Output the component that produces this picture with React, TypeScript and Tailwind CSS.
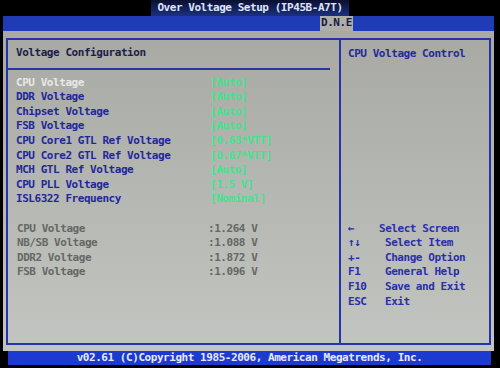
import React from 'react';

const settings = [
  { label: 'CPU Voltage', value: '[Auto]', active: true },
  { label: 'DDR Voltage', value: '[Auto]' },
  { label: 'Chipset Voltage', value: '[Auto]' },
  { label: 'FSB Voltage', value: '[Auto]' },
  { label: 'CPU Core1 GTL Ref Voltage', value: '[0.63*VTT]' },
  { label: 'CPU Core2 GTL Ref Voltage', value: '[0.67*VTT]' },
  { label: 'MCH GTL Ref Voltage', value: '[Auto]' },
  { label: 'CPU PLL Voltage', value: '[1.5 V]' },
  { label: 'ISL6322 Frequency', value: '[Nominal]' },
];

const readings = [
  { label: 'CPU Voltage', value: ':1.264 V' },
  { label: 'NB/SB Voltage', value: ':1.088 V' },
  { label: 'DDR2 Voltage', value: ':1.872 V' },
  { label: 'FSB Voltage', value: ':1.096 V' },
];

const help = [
  { key: '←', text: 'Select Screen', shift: true },
  { key: '↑↓', text: 'Select Item' },
  { key: '+-', text: 'Change Option' },
  { key: 'F1', text: 'General Help' },
  { key: 'F10', text: 'Save and Exit' },
  { key: 'ESC', text: 'Exit' },
];

const App = () => {
  return (
    <div
      className="w-[500px] h-[368px] bg-black overflow-hidden text-[11px] font-bold tracking-[-0.45px] leading-[14.6px]"
      style={{ fontFamily: '"DejaVu Sans Mono", "Liberation Mono", monospace' }}
    >
      {/* title */}
      <div className="h-[16px] flex justify-center">
        <span className="px-[6px] pt-[1px] bg-[linear-gradient(to_bottom,#0a1030,#1b3080)] text-[#dfe3f6]">
          Over Voltage Setup (IP45B-A7T)
        </span>
      </div>

      {/* menu bar */}
      <div className="ml-[3px] mr-[6px] h-[15px] bg-[#1f3cb4] flex">
        <span className="ml-[317px] px-[1px] bg-[#aeaea6] text-[#1a1c48]">D.N.E</span>
      </div>

      {/* main panel */}
      <div className="ml-[3px] mr-[6px] h-[320px] pt-[7px] px-[3px] pb-[6px] bg-[linear-gradient(to_bottom,#a8a9a3,#c2c5c1)]">
        <div className="h-full border-2 border-[#2634a8] flex">
          {/* left */}
          <div className="w-[333px] border-r-2 border-[#2634a8] pt-[6px]">
            <div className="pl-[8px] text-[#1c1d4c]">Voltage Configuration</div>
            <div className="mt-[7px] mr-[9px] h-[2px] bg-[#2634a8]"></div>
            <div className="mt-[6px] pl-[8px]">
              {settings.map((s) => (
                <div key={s.label} className="flex">
                  <span className={`w-[194px] ${s.active ? 'text-[#e6e8e6]' : 'text-[#22289a]'}`}>{s.label}</span>
                  <span className="text-[#3fe58e]">{s.value}</span>
                </div>
              ))}
            </div>
            <div className="mt-[14.6px] pl-[9px]">
              {readings.map((r) => (
                <div key={r.label} className="flex text-[#666866]">
                  <span className="w-[191px]">{r.label}</span>
                  <span>{r.value}</span>
                </div>
              ))}
            </div>
          </div>

          {/* right */}
          <div className="flex-1 pt-[7px] pl-[7px]">
            <div className="text-[#25299c]">CPU Voltage Control</div>
            <div className="mt-[160px] pl-[-2px]">
              {help.map((h) => (
                <div key={h.key} className="flex text-[#2a30a8]">
                  <span className="w-[37px]">{h.key}</span>
                  <span className={h.shift ? '-ml-[6px]' : ''}>{h.text}</span>
                </div>
              ))}
            </div>
          </div>
        </div>
      </div>

      {/* footer */}
      <div className="ml-[8px] mr-[9px] h-[14px] bg-[#1c3ad0] flex justify-center text-[#e6eaf8] leading-[14px]">
        v02.61 (C)Copyright 1985-2006, American Megatrends, Inc.
      </div>
    </div>
  );
};

export default App;
